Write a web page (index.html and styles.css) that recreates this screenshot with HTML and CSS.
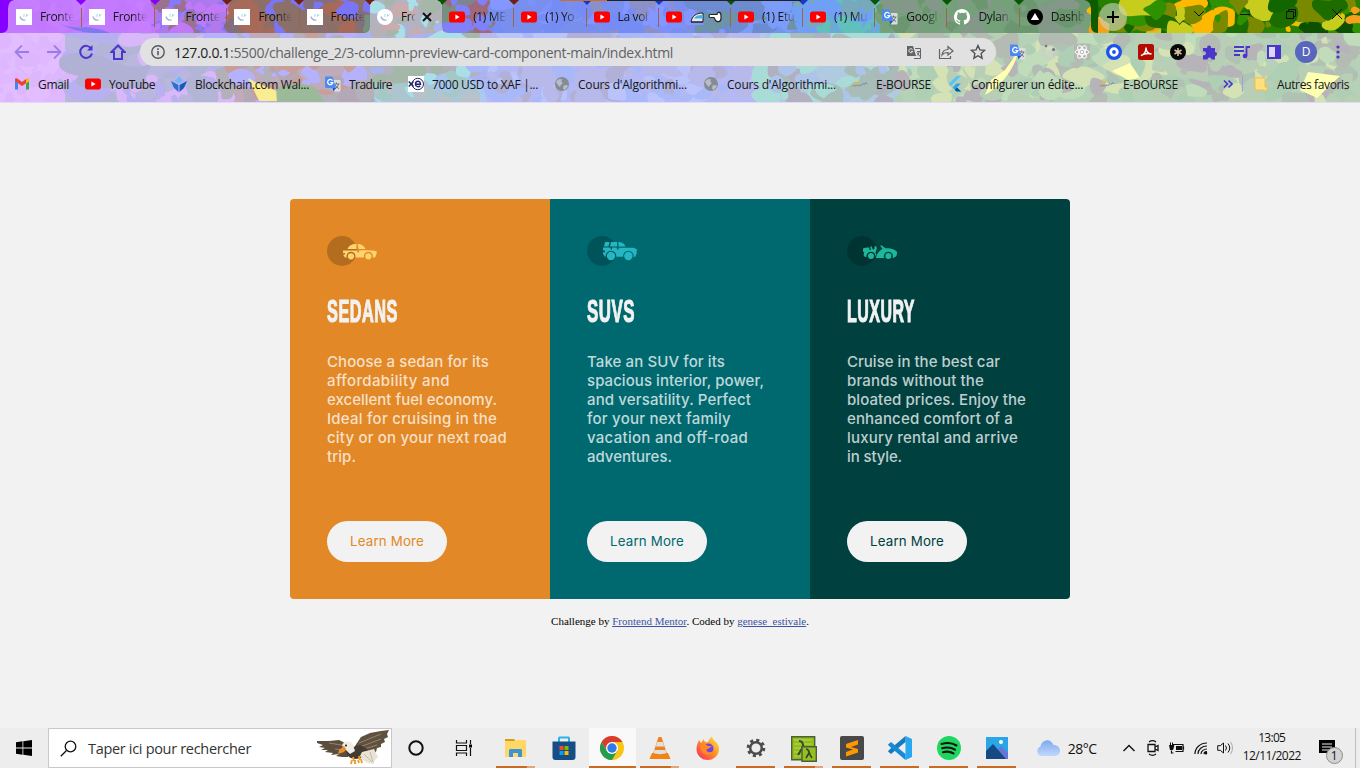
FILE: index.html
```html
<!DOCTYPE html>
<html lang="en">
<head>
<meta charset="utf-8">
<title>Frontend Mentor | 3-column preview card component</title>
<link rel="stylesheet" href="styles.css">
</head>
<body>
<svg class="defs" aria-hidden="true">
  <mask id="arch-s" maskUnits="userSpaceOnUse" x="0" y="0" width="51" height="30"><path d="M0 0h51v30H0z" fill="#fff"/><circle cx="24" cy="20.300" r="4.500"/><circle cx="41.400" cy="20.300" r="4.500"/></mask>
  <mask id="arch-l" maskUnits="userSpaceOnUse" x="0" y="0" width="51" height="30"><path d="M0 0h51v30H0z" fill="#fff"/><circle cx="24" cy="20" r="5.300"/><circle cx="41.400" cy="20" r="5.300"/></mask>
  <symbol id="fm" viewBox="0 0 16 16"><path d="M4 7.500c.5 2.500 2.500 3.800 5.500 3.600" fill="none" stroke="#a9b2d4" stroke-width="1.300"/><path d="M8 5v3M10.500 7.500l2-2M10.500 5v2.500" fill="none" stroke="#a4dbe0" stroke-width="1"/></symbol>
  <symbol id="yt" viewBox="0 0 16 16"><rect y="2.500" width="16" height="11" rx="2.800" fill="#f00"/><path d="M6.400 5.500v5L10.600 8z" fill="#fff"/></symbol>
  <symbol id="gt" viewBox="0 0 16 16"><path d="M6 4h8.500a1 1 0 0 1 1 1v9.500a1 1 0 0 1-1 1H9z" fill="#dcdcdc"/><path d="M8.500 8h6M11.500 6.500V8M13.500 8c-.5 2.500-2 4-4 5M10 8.500c.8 2 2 3 4 4" stroke="#68747c" fill="none"/><path d="M1 .5h6.500L11 12H1.500A1.500 1.500 0 0 1 0 10.500v-9a1 1 0 0 1 1-1z" fill="#4a8af4"/><path d="M7.500 12H11l-2.500 3.500z" fill="#2454d6"/><path d="M7.400 4.600a2.600 2.600 0 1 0 .4 2H5.300" fill="none" stroke="#fff" stroke-width="1.300"/></symbol>
  <symbol id="globe" viewBox="0 0 16 16"><circle cx="8" cy="8" r="7" fill="#858b92"/><path d="M2 5.500l3-2.500 3.500.5-1.500 2 2 1.500-2 2-1.500 2-2-2.500zM9.500 9.500l3.500-.5 1 1.500-3.500 3.500-1.500-1.500z" fill="#b9bdcb"/></symbol>
  <symbol id="eb" viewBox="0 0 16 16"><path d="M1 10c1.500 0 3-4.500 6-4.500" stroke="#e9bd2d" stroke-width="1.400" fill="none"/><path d="M1 10.500c1-3 2 1 3-1s2 2 3 0 2 2 3-1 2 2 3-1 1 1.500 2.500 0" stroke="#7388a5" fill="none"/></symbol>
</svg>

<header class="chrome">
  <svg class="theme" id="theme" viewBox="0 0 1360 103" preserveAspectRatio="none"></svg>
  <div class="chrome-ui">
    <div class="tabstrip">
      <div class="tab wide"><svg class="ic white"><use href="#fm"/></svg><span class="title">Fronte</span></div>
      <div class="tab wide"><svg class="ic white"><use href="#fm"/></svg><span class="title">Fronte</span></div>
      <div class="tab wide"><svg class="ic white"><use href="#fm"/></svg><span class="title">Fronte</span></div>
      <div class="tab"><svg class="ic white"><use href="#fm"/></svg><span class="title">Fronte</span></div>
      <div class="tab last slim"><svg class="ic white"><use href="#fm"/></svg><span class="title">Fronte</span></div>
      <div class="tab active"><svg class="ic white round"><use href="#fm"/></svg><span class="title short">Fro</span><svg class="close" viewBox="0 0 10 10"><path d="M1 1l8 8M9 1L1 9" stroke="#111" stroke-width="2"/></svg></div>
      <div class="tab"><svg class="ic"><use href="#yt"/></svg><span class="title">(1) ME</span></div>
      <div class="tab"><svg class="ic"><use href="#yt"/></svg><span class="title">(1) Yo</span></div>
      <div class="tab"><svg class="ic"><use href="#yt"/></svg><span class="title">La voi</span></div>
      <div class="tab"><svg class="ic"><use href="#yt"/></svg>
        <svg class="emoji" viewBox="0 0 33 16"><path d="M1 13C2 7 6 4 13 4v9z" fill="#e8e8e8" stroke="#222"/><path d="M4 9.500C5 7 8 6 13 6v3.500z" fill="#48b0e8"/><path d="M1 13h12" stroke="#222"/><path d="M20.500 5.500h6.500c0-3 4-3 4 1v3c0 4-5 4-6 1l-1-2h-3.500c-2 0-2-3 0-3z" fill="#fff" stroke="#222" stroke-width="1.200"/></svg></div>
      <div class="tab"><svg class="ic"><use href="#yt"/></svg><span class="title">(1) Etu</span></div>
      <div class="tab"><svg class="ic"><use href="#yt"/></svg><span class="title">(1) Mu</span></div>
      <div class="tab"><svg class="ic"><use href="#gt"/></svg><span class="title">Googl</span></div>
      <div class="tab"><svg class="ic" viewBox="0 0 16 16"><path fill="#fff" d="M8 0C3.580 0 0 3.580 0 8c0 3.540 2.290 6.530 5.470 7.590.4.070.55-.17.55-.38v-1.490c-2.010.37-2.530-.49-2.690-.94-.09-.23-.48-.94-.82-1.130-.28-.15-.68-.52-.01-.53.63-.01 1.080.58 1.230.82.72 1.210 1.870.87 2.330.66.07-.52.28-.87.51-1.070-1.780-.2-3.640-.89-3.640-3.950 0-.87.31-1.590.82-2.150-.08-.2-.36-1.020.08-2.120 0 0 .67-.21 2.200.82a7.500 7.500 0 0 1 4 0c1.530-1.040 2.200-.82 2.200-.82.44 1.100.16 1.920.08 2.120.51.56.82 1.270.82 2.150 0 3.070-1.870 3.750-3.650 3.950.29.25.54.73.54 1.480v2.200c0 .21.15.46.55.38A8 8 0 0 0 8 0z"/></svg><span class="title">Dylan.</span></div>
      <div class="tab last"><svg class="ic" viewBox="0 0 16 16"><circle cx="8" cy="8" r="8"/><path d="M8 4l4.200 7H3.800z" fill="#fff"/></svg><span class="title">Dashb</span></div>
      <div class="newtab"><svg viewBox="0 0 28 28"><circle cx="14" cy="14" r="14" fill="#c9d3bd" opacity=".62"/><path d="M14 8v12M8 14h12" stroke="#000" stroke-width="2"/></svg></div>
      <div class="winctl">
        <svg viewBox="0 0 16 16"><path d="M3 5l5 5 5-5" /></svg>
        <svg viewBox="0 0 16 16"><path d="M3 8.500h10"/></svg>
        <svg viewBox="0 0 16 16"><path d="M3.500 5.500h7v7h-7zM5.500 5.500v-2h7v7h-2"/></svg>
        <svg viewBox="0 0 16 16"><path d="M3 3l10 10M13 3L3 13"/></svg>
      </div>
    </div>

    <div class="toolbar">
      <div class="nav">
        <svg viewBox="0 0 16 16" class="dim"><path d="M15 8H2M8 1.500L1.500 8 8 14.500"/></svg>
        <svg viewBox="0 0 16 16" class="dim"><path d="M1 8h13M8 1.500L14.500 8 8 14.500"/></svg>
        <svg viewBox="0 0 16 16"><path d="M13.200 4.500A6 6 0 1 0 14 9.500" stroke-width="2"/><path d="M14.500 1v5.500H9z" fill="#4b36cc" stroke="none"/></svg>
        <svg viewBox="0 0 16 16"><path d="M8 1.500L1.500 8H4v7h8V8h2.500z" stroke-width="2"/></svg>
      </div>
      <div class="omnibox">
        <svg class="info" viewBox="0 0 16 16"><circle cx="8" cy="8" r="6.200" fill="none" stroke="#55585c" stroke-width="1.400"/><path d="M8 7v4.300M8 4.300v1.600" stroke="#55585c" stroke-width="1.600"/></svg>
        <span class="url" data-w="499"><b>127.0.0.1</b>:5500/challenge_2/3-column-preview-card-component-main/index.html</span>
        <span class="omni-icons">
          <svg viewBox="0 0 16 16"><path d="M1 2h6l3 10H1z" fill="#606367"/><path d="M9 4.500h5.500v10H8M11 7.500h3M13 7.500c0 2-1 3-2 4M11 8.500l3 4" fill="none" stroke="#606367"/><path d="M6.500 5.500a2 2 0 1 0 .3 1.800H5" stroke="#e1e1e1" fill="none"/></svg>
          <svg viewBox="0 0 16 16"><path d="M1.500 5v9.500h11V12M4 11c.5-4 3-5.500 6-5.500V2.500L15 7l-5 4V8.500c-3 0-4.500.5-6 2.500z" fill="none" stroke="#606367" stroke-width="1.200"/></svg>
          <svg viewBox="0 0 16 16"><path d="M8 1.500l1.900 4.400 4.800.4-3.600 3.200 1 4.700L8 11.700l-4.100 2.500 1-4.700L1.300 6.300l4.800-.4z" fill="none" stroke="#505356" stroke-width="1.400"/></svg>
        </span>
      </div>
      <div class="exts">
        <svg viewBox="0 0 16 16"><use href="#gt"/></svg>
        <svg viewBox="0 0 16 16"><circle cx="7.500" cy="8.500" r="6.500" fill="none" stroke="#cdcdc9" stroke-width="1.500"/><circle cx="8" cy="9" r="3" fill="none" stroke="#d3d3cf" stroke-width="1.500"/><circle cx="4" cy="2" r="1.300" fill="#777"/><circle cx="11.500" cy="5.500" r="1.600" fill="#777"/></svg>
        <svg viewBox="0 0 16 16"><rect width="16" height="16" fill="#b6b6b2"/><g fill="none" stroke="#fff"><ellipse cx="8" cy="8" rx="7" ry="2.700"/><ellipse cx="8" cy="8" rx="7" ry="2.700" transform="rotate(60 8 8)"/><ellipse cx="8" cy="8" rx="7" ry="2.700" transform="rotate(120 8 8)"/></g><circle cx="8" cy="8" r="1.300" fill="#fff"/></svg>
        <svg viewBox="0 0 16 16"><circle cx="8" cy="8" r="8" fill="#1c53f0"/><circle cx="8" cy="8" r="3.300" fill="#1c53f0" stroke="#fff" stroke-width="2.800"/></svg>
        <svg viewBox="0 0 16 16"><rect width="16" height="16" rx="2.500" fill="#b30b00"/><path d="M3 11.500c4-1 5-4 5-8 0 4 1.500 6 5.500 6.500-4-1-7-.5-10.500 1.500z" fill="none" stroke="#fff" stroke-width="1.400"/></svg>
        <svg viewBox="0 0 16 16"><circle cx="8" cy="8" r="8" fill="#080808"/><path d="M8 4v8M4.500 6l7 4M11.500 6l-7 4" stroke="#d9c7a8" stroke-width="1.500"/></svg>
        <svg viewBox="0 0 16 16"><path d="M1 4h4.200a2 2 0 1 1 3.800 0h4v4a2 2 0 1 1 0 4v3.500H9.500a2 2 0 1 0-4 0H1V11a2 2 0 1 0 0-3.500z" fill="#4b36cc"/></svg>
        <svg viewBox="0 0 16 16"><path d="M0 3h10M0 7h10M0 11h6M12.500 12V3H16" stroke="#4b36cc" stroke-width="1.800" fill="none"/><circle cx="11" cy="12" r="2.300" fill="#4b36cc"/></svg>
        <svg viewBox="0 0 16 16"><path d="M2 2h12v12H2z" fill="#ddd8fa" stroke="#4b36cc" stroke-width="2"/><path d="M9 2h5v12H9z" fill="#4b36cc"/></svg>
        <span class="avatar">D</span>
        <svg viewBox="0 0 16 16" fill="#4b36cc"><circle cx="8" cy="3" r="1.600"/><circle cx="8" cy="8" r="1.600"/><circle cx="8" cy="13" r="1.600"/></svg>
      </div>
    </div>

    <nav class="bookmarks">
      <a><svg viewBox="0 0 16 16"><path d="M1 3v10.500h3V7z" fill="#4285f4"/><path d="M15 3v10.500h-3V7z" fill="#34a853"/><path d="M1 5V3.500C1 2 2.800 2 4 3l4 3 4-3v4.200L8 10 1 5z" fill="#ea4335"/><path d="M12 3c1.500-1.200 3-.8 3 1v1.500l-3 2z" fill="#fbbc04"/></svg><span data-w="31">Gmail</span></a>
      <a><svg><use href="#yt"/></svg><span data-w="46">YouTube</span></a>
      <a><svg viewBox="0 0 16 16"><path d="M8 0l4.500 5L8 7.500 3.500 5z" fill="#75b8f5"/><path d="M0 5l7.500 4v7L3 12z" fill="#2b6fd6"/><path d="M16 5L8.500 9v7l4.500-4z" fill="#185abc"/></svg><span data-w="114">Blockchain.com Wal...</span></a>
      <a><svg><use href="#gt"/></svg><span data-w="43">Traduire</span></a>
      <a><svg viewBox="0 0 16 16"><rect width="16" height="16" fill="#fff"/><circle cx="9.800" cy="8" r="5.700" fill="none" stroke="#20256b"/><path d="M.8 5.500L5.500 10.500M5.500 5.500L.8 10.500M7.500 8.200h5c0-4-5-3.800-5 0 0 3 3.400 3 4.700 1.500" fill="none" stroke="#20256b" stroke-width="1.500"/></svg><span data-w="106">7000 USD to XAF |...</span></a>
      <a><svg><use href="#globe"/></svg><span data-w="109">Cours d'Algorithmi...</span></a>
      <a><svg><use href="#globe"/></svg><span data-w="109">Cours d'Algorithmi...</span></a>
      <a><svg><use href="#eb"/></svg><span data-w="55">E-BOURSE</span></a>
      <a><svg viewBox="0 0 16 16"><path d="M9.500 0H14L4 10 1.800 7.700z" fill="#54c5f8"/><path d="M9.500 7.500H14L10 11.500l4 4H9.500l-4-4z" fill="#29a8ee"/><path d="M7.800 13.700l2.200-2.200 4 4H9.500z" fill="#01579b"/></svg><span data-w="112">Configurer un édite...</span></a>
      <a><svg><use href="#eb"/></svg><span data-w="55">E-BOURSE</span></a>
      <span class="more"><svg viewBox="0 0 10 10"><path d="M1 1.500L4.500 5 1 8.500M5.500 1.500L9 5 5.500 8.500"/></svg></span>
      <a class="others"><svg viewBox="0 0 16 16"><path d="M2 2h10v9h2v4h-2l-1-1H2z" fill="#ffdf7e" stroke="#ecc14f"/></svg><span data-w="72">Autres favoris</span></a>
    </nav>
  </div>
</header>

<main class="page">
  <div class="cards">
    <section class="card sedans">
      <svg class="car" viewBox="0 0 51 30"><circle cx="15" cy="15" r="15" fill="#000" opacity=".2"/><g fill="#ffd36e"><path mask="url(#arch-s)" d="M20.500 13c1-3 4-5 8.800-5l.3 5zM30.600 8c4 0 6.300 1.500 8 5h-7zM16 14.500h13.800l1 2h1.500l-.5-2c7-.5 13-.3 18 .8l-.3 2.700-1.500 3.500H18L16 18.500h2V17h-2z"/><circle cx="24" cy="20.300" r="3.100"/><circle cx="41.400" cy="20.300" r="3.100"/></g></svg>
      <h2><span data-w="71" data-fit="scale">SEDANS</span></h2>
      <p><span data-w="162">Choose a sedan for its</span><br><span data-w="123">affordability and</span><br><span data-w="170">excellent fuel economy.</span><br><span data-w="170">Ideal for cruising in the</span><br><span data-w="180">city or on your next road</span><br><span data-w="29">trip.</span></p>
      <a class="btn"><span data-w="74">Learn More</span></a>
    </section>
    <section class="card suvs">
      <svg class="car" viewBox="0 0 51 30"><circle cx="15" cy="15" r="15" fill="#000" opacity=".2"/><g fill="#26b5c2"><path mask="url(#arch-l)" d="M18 6h4.500l-1 4.500H17zM24 6h6v4.500h-7zM31.300 6c4 0 6 1.500 7.200 4.500h-7zM16 11.500h7.500l.3 2h1.200v-2h4.500l.7 2h1.500v-1.800h12c3 0 5 .7 6.300 1.500l-.5 2 .3 2-1.500 3.500H18L16 18v-1.800h2v-1.700h-2z"/><circle cx="24" cy="20" r="4.200"/><circle cx="41.400" cy="20" r="4.200"/></g></svg>
      <h2><span data-w="48" data-fit="scale">SUVS</span></h2>
      <p><span data-w="138">Take an SUV for its</span><br><span data-w="177">spacious interior, power,</span><br><span data-w="164">and versatility. Perfect</span><br><span data-w="144">for your next family</span><br><span data-w="161">vacation and off-road</span><br><span data-w="85">adventures.</span></p>
      <a class="btn"><span data-w="74">Learn More</span></a>
    </section>
    <section class="card luxury">
      <svg class="car" viewBox="0 0 51 30"><circle cx="15" cy="15" r="15" fill="#000" opacity=".2"/><g fill="#1db79b"><path mask="url(#arch-s)" d="M16 12.500c2-1 4.500-1.200 6.300-.8v2.300h1.500l-.6-3.500 1.300-.3 1.200 3h1.500l.3-2.800 1.800-.3.500 3-1.300 3.500 1 2.500-1.500 2H18L16.500 19l.7-2.500-1.200-1zM34 9l4.500 3.300c5-.5 9.500 1 11.800 4l-1 4-3 1.700H29c.5-4 3-7 6.500-9.200L33.300 10z"/><circle cx="24" cy="19.900" r="3"/><circle cx="41.400" cy="19.900" r="3"/></g></svg>
      <h2><span data-w="68" data-fit="scale">LUXURY</span></h2>
      <p><span data-w="153">Cruise in the best car</span><br><span data-w="137">brands without the</span><br><span data-w="179">bloated prices. Enjoy the</span><br><span data-w="166">enhanced comfort of a</span><br><span data-w="171">luxury rental and arrive</span><br><span data-w="55">in style.</span></p>
      <a class="btn"><span data-w="74">Learn More</span></a>
    </section>
  </div>
  <footer class="attribution">Challenge by <a>Frontend Mentor</a>. Coded by <a>genese_estivale</a>.</footer>
</main>

<div class="taskbar">
  <div class="start"><svg viewBox="0 0 16 16"><path d="M0 2.200L6.500 1.300V7.600H0zM7.300 1.200L16 0v7.600H7.300zM0 8.400h6.500v6.300L0 13.800zM7.300 8.400H16V16l-8.700-1.200z"/></svg></div>
  <div class="search">
    <svg class="mag" viewBox="0 0 17 17"><circle cx="10.500" cy="6.500" r="5.300" fill="none" stroke="#111" stroke-width="1.300"/><path d="M6.500 10.500L.8 16.200" stroke="#111" stroke-width="1.300"/></svg>
    <span data-w="163">Taper ici pour rechercher</span>
    <svg class="eagle" viewBox="0 0 72 38">
      <path d="M0 12l12 0 10-1 6 3 5 7-2 7-6 0-6-1 3-2-8 1 2-2-8-1 3-2-7 0 4-2-6-1 4-2-6-2z" fill="#5c4d3d"/>
      <path d="M38 17l6-9 9-4 11-2 8-1-2 4 1 3-4 2 1 3-4 2 0 3-4 1-1 4-5 1-6 3-10-3z" fill="#5f503f"/>
      <path d="M12 14l12 2 6 6M42 14l22-9M43 18l21-8M44 21l16-5M18 20l11 1" stroke="#a39179" stroke-width=".8" fill="none"/>
      <path d="M29 20c0 6 3 10 10 10l10-2 3-7-9-5z" fill="#443a31"/>
      <path d="M45 23l12-3 4 8-4 4 0 3-6-1-5-3-3-4z" fill="#e8e3d5"/><path d="M47 25l8 8M53 23l3 10" stroke="#b8b0a0" stroke-width=".8"/>
      <path d="M25 16c2-4 9-5 11 0l2 6-5 3-5-5z" fill="#f1ede4"/>
      <path d="M27 17l-5 4-1 4 6-2 2-3z" fill="#eb8f27"/><circle cx="29" cy="16.500" r=".9"/>
      <path d="M36 28l1 4M42 27l1 4M35 31l-1 4M38 31v4M41 31l1 3M44 30l1 4" stroke="#ee9b29" stroke-width="1.900"/>
    </svg>
  </div>
  <div class="apps system">
    <div class="app"><svg viewBox="0 0 24 24"><circle cx="12" cy="12" r="6.700" fill="none" stroke="#111" stroke-width="2"/></svg></div>
    <div class="app"><svg viewBox="0 0 24 24"><path d="M4.500 4v3h10V4M4.500 20v-3h10v3M4.500 9.500h10v5h-10zM18.500 4v4M18.500 12v8" fill="none" stroke="#111" stroke-width="1.200"/><rect x="17" y="8.500" width="3" height="3"/></svg></div>
  </div>
  <div class="apps">
    <div class="app run multi"><svg viewBox="0 0 24 24"><path d="M1 3h9l2 3H1z" fill="#d89d17"/><path d="M1 5h10l1-1h10v17H1z" fill="#ffd766"/><path d="M5 21v-7l1-1h11l1 1v7h-4v-4H9v4z" fill="#3c94d4"/></svg></div>
    <div class="app"><svg viewBox="0 0 24 24"><path d="M7 7V2q0-.5.5-.5h9q.5 0 .5.500V7" fill="none" stroke="#2bb4ea" stroke-width="2"/><path d="M.5 5.500h23V21c0 2-1 3-3 3h-17c-2 0-3-1-3-3z" fill="#164d87"/><path d="M7.500 10h4v4h-4z" fill="#f25022"/><path d="M12.500 10h4v4h-4z" fill="#7fba00"/><path d="M7.500 15h4v4h-4z" fill="#00a4ef"/><path d="M12.500 15h4v4h-4z" fill="#ffb900"/></svg></div>
    <div class="app run current"><svg viewBox="0 0 24 24"><circle cx="12" cy="12" r="12" fill="#f9c515"/><path d="M1.600 6A12 12 0 0 1 22.400 6H12L7 15z" fill="#db3b2e"/><path d="M1.600 6A12 12 0 0 0 12 24l5.200-9-10.400 0z" fill="#229d50"/><circle cx="12" cy="12" r="6" fill="#fff"/><circle cx="12" cy="12" r="4.700" fill="#3079e8"/></svg></div>
    <div class="app run multi"><svg viewBox="0 0 24 24"><path d="M4 17h16l2.500 6h-21z" fill="#f58212"/><path d="M10.500 1h3L19 18c-3 2-11 2-14 0z" fill="#ee8220"/><path d="M9.200 6h5.600l1.400 4.500H7.800zM6.500 14h11l1 3c-3 1.500-10 1.500-13 0z" fill="#e0e0e0"/></svg></div>
    <div class="app"><svg viewBox="0 0 24 24"><defs><linearGradient id="fx" x1="1" y1="0" x2="0" y2="1"><stop stop-color="#fff04a"/><stop offset=".5" stop-color="#ff8a22"/><stop offset="1" stop-color="#f42368"/></linearGradient></defs><path d="M3 4l2 3 3-4c0 3 1 3 4 3 1-3 2-4 4-5.500 0 3 5 5 6.500 9C25 17 19 24 12 24 5 24 .5 19 .5 13 .5 9 2 7 3 4z" fill="url(#fx)"/><circle cx="12.500" cy="12.500" r="5" fill="#7543e0"/><path d="M4 9c4-1 6-1 8 1l4 0-4 3c-2 0-2 2 0 3 3 1 6-1 6-1-2 5-12 5-13-2z" fill="#ff8b26"/></svg></div>
    <div class="app run"><svg viewBox="0 0 24 24"><circle cx="12" cy="12" r="7.800" fill="none" stroke="#4c4c4c" stroke-width="3" stroke-dasharray="3.060 3.060"/><circle cx="12" cy="12" r="5.800" fill="none" stroke="#4c4c4c" stroke-width="2.500"/></svg></div>
    <div class="app run multi"><svg class="big" viewBox="0 0 26 26"><path d="M.7.700h23v23H.7z" fill="#91bd1c" stroke="#4f5c3b" stroke-width="1.400"/><path d="M3 4h18M3 8h18M3 12h18M3 16h18M3 20h18" stroke="#b6d752"/><path d="M8 5c5 0 3 4 7 14M12 11l-5 8" stroke="#384237" stroke-width="2" fill="none"/><path d="M11 10.700h14.300v14.600H11z" fill="#94c11d" stroke="#4f5c3b" stroke-width="1.400"/><path d="M15 13c4 0 2 4 6 9M18 17l-3 5" stroke="#384237" stroke-width="1.600" fill="none"/></svg></div>
    <div class="app run"><svg viewBox="0 0 24 24"><rect width="24" height="24" rx="2" fill="#484848"/><path d="M6 8l12-4v4.500L11 11l7 2v3.500L6 20.500V16l7-2.500-7-2z" fill="#ff9800"/></svg></div>
    <div class="app run"><svg viewBox="0 0 24 24"><path d="M17.500 0L24 3v18l-6.500 3z" fill="#29a8f2"/><path d="M17.500 0v6L3 18l-3-2.500L1 14z" fill="#147bc1"/><path d="M17.500 24v-6L3 6 0 8.500 1 10z" fill="#168bd4"/></svg></div>
    <div class="app run"><svg viewBox="0 0 24 24"><circle cx="12" cy="12" r="12" fill="#1ed760"/><path d="M4.500 8c5-1.500 11-1 15 1.500M5.200 12.300c4.500-1.300 9-.8 12.800 1.400M6 16.200c4-1 7.500-.6 10.500 1.200" stroke="#111" stroke-width="2.100" fill="none" stroke-linecap="round"/></svg></div>
    <div class="app run"><svg viewBox="0 0 24 24"><rect x="1" y="1" width="22" height="22" fill="#2aa5e7"/><path d="M10 17l6-7 7 7v6H10z" fill="#6775d4"/><path d="M1 15l7-7 13 15H1z" fill="#164984"/><circle cx="16" cy="6" r="2" fill="#fff"/></svg></div>
  </div>
  <div class="tray">
    <svg class="cloud" viewBox="0 0 24 18"><defs><linearGradient id="cl" x2="0" y2="1"><stop stop-color="#7fa9ed"/><stop offset="1" stop-color="#c1d8fc"/></linearGradient></defs><path d="M5 17a5 5 0 0 1-.5-9.500C6 0 15-1 17.500 6 26 6 26 17 19 17z" fill="url(#cl)"/></svg>
    <span class="temp" data-w="29">28°C</span>
    <div class="tray-icons">
      <svg viewBox="0 0 16 16"><path d="M2.500 11L8 5.500l5.500 5.500" stroke-width="1.400"/></svg>
      <svg viewBox="0 0 16 16"><path d="M3 4.500h7v7H3zM10 7l3-1.500v5L10 9M4 2c2-1.500 5-1.500 7 0M4 14c2 1.500 5 1.500 7 0" stroke-width="1.300"/></svg>
      <svg viewBox="0 0 16 16"><path d="M4.500 7V4.500h9.500v7H6.500M14.500 6.500v3M2.500 10.500V13h2" stroke-width="1.200"/><path d="M7 6h6v4H7zM0 5h5v2l-1 3H1z" fill="#111" stroke="none"/><path d="M1.500 2.500V5M3.500 2.500V5"/></svg>
      <svg viewBox="0 0 16 16"><path d="M2 14C2 8 7 3 14 3M5 14c0-4.500 4-8 9-8M8 14c0-3 3-5 6-5M11 14c0-1.500 1.500-2.500 3-2.500" stroke-width="1.200"/><circle cx="12.800" cy="13" r="1.500" fill="#111" stroke="none"/></svg>
      <svg viewBox="0 0 16 16"><path d="M.7 5.700h2.600L6.500 3v10L3.300 10.300H.7zM8.500 5.500q2 2.500 0 5M11 3.500q3.500 4.500 0 9"/><path d="M13.500 1.800q4 6.200 0 12.400" stroke="#aaa"/></svg>
    </div>
    <div class="clock"><span data-w="27">13:05</span><span data-w="58">12/11/2022</span></div>
    <div class="notif"><svg viewBox="0 0 18 16"><path d="M1 0h16v13h-4v3l-3-3H1z"/><path d="M4 4h10M4 7h10M4 10h7" stroke="#eee"/></svg><span class="badge">1</span></div>
    <i class="peek"></i>
  </div>
</div>
<script src="app.js"></script>
</body>
</html>
```
FILE: styles.css
```css
* { box-sizing: border-box; }
body { margin: 0; width: 1360px; height: 768px; overflow: hidden; display: flex; flex-direction: column; background: #f2f2f2; font-family: "Open Sans", "Noto Sans", sans-serif; }
svg { display: block; flex: none; }
.defs { position: absolute; width: 0; height: 0; }
[data-w] { display: inline-block; white-space: pre; }

.chrome { position: relative; height: 103px; flex: none; border-bottom: 1px solid #e3d9f7; overflow: hidden; }
.theme { position: absolute; left: 0; top: 0; width: 1360px; height: 103px; }
.chrome-ui { position: relative; font-size: 12px; color: #161616; }
.tabstrip { height: 33px; display: flex; padding-left: 9px; }
.tab { width: 72.200px; height: 33px; padding: 0 0 0 7px; display: flex; align-items: center; background: linear-gradient(#9a6648, #9a6648) no-repeat right 8px / 1px 19px; }
.tab.last, .tab.active { background-image: none; }
.tab.wide { width: 72.800px; }
.tab.slim { width: 70.400px; }
.ic { width: 16px; height: 16px; }
.ic.white { background: #fff; }
.ic.round { border-radius: 50%; }
.title { width: 35px; margin-left: 8px; overflow: hidden; white-space: nowrap; letter-spacing: -.35px; -webkit-mask-image: linear-gradient(90deg, #000 55%, transparent 98%); mask-image: linear-gradient(90deg, #000 55%, transparent 98%); }
.title.short { width: 15px; }
.close { width: 10px; height: 10px; margin-left: 6px; }
.emoji { width: 33px; height: 16px; margin-left: 8px; }
.newtab { margin: 3px 0 0 7px; }
.newtab svg { width: 28px; height: 28px; }
.winctl { margin-left: 50px; display: flex; gap: 30px; padding: 6px 0 0 14px; }
.winctl svg { width: 16px; height: 16px; fill: none; stroke: #111; }

.toolbar { height: 38px; display: flex; align-items: center; }
.nav { width: 140px; display: flex; gap: 16px; padding-left: 14px; }
.nav svg { width: 16px; height: 16px; fill: none; stroke: #4b36cc; stroke-width: 1.800; }
.nav .dim { opacity: .45; }
.omnibox { width: 856px; height: 28px; border-radius: 14px; background: #e1e1e1; display: flex; align-items: center; padding: 0 10px; }
.info { width: 16px; height: 16px; margin-right: 8px; }
.url { font-size: 14px; color: #5f6266; }
.url b { font-weight: 400; color: #202124; }
.omni-icons { margin-left: auto; display: flex; gap: 16px; }
.omni-icons svg, .exts svg { width: 16px; height: 16px; }
.exts { margin-left: 14px; display: flex; gap: 16px; align-items: center; }
.avatar { width: 22px; height: 22px; margin: 0 -3px; border-radius: 50%; background: #5866bd; color: #fff; text-align: center; line-height: 22px; font-size: 12px; }

.bookmarks { height: 26px; display: flex; align-items: center; gap: 16px; padding-left: 14px; }
.bookmarks a { display: flex; align-items: center; gap: 8px; }
.bookmarks a svg { width: 16px; height: 16px; }
.more { margin-left: 29px; width: 20px; border-right: 1px solid #9da0dc; height: 16px; padding-top: 3px; }
.more svg { width: 10px; height: 10px; fill: none; stroke: #4b36cc; stroke-width: 1.700; }
.bookmarks .others { margin-left: -6px; }

.page { height: 625px; flex: none; padding-top: 96px; }
.cards { width: 780px; height: 400px; margin: 0 auto; display: flex; border-radius: 4px; overflow: hidden; }
.card { width: 260px; padding: 37px; display: flex; flex-direction: column; align-items: flex-start; }
.sedans { background: #e28826; }
.suvs { background: #006970; }
.luxury { background: #004140; }
.car { width: 51px; height: 30px; }
.card h2 { margin: 25px 0 0; height: 40px; font: 700 32px/40px "Liberation Sans", sans-serif; color: #f2f2f2; -webkit-text-stroke: 1.200px #f2f2f2; letter-spacing: 1px; }
.card p { margin: 21px 0 0; font: 500 15px/19px "Inter", sans-serif; color: rgba(255, 255, 255, .75); white-space: nowrap; }
.card p span { vertical-align: top; }
.btn { width: 120px; height: 41px; margin-top: auto; border-radius: 21px; background: #f2f2f2; font: 400 13.300px/41px "Inter", sans-serif; display: flex; justify-content: center; }
.sedans .btn { color: #e28826; }
.suvs .btn { color: #006970; }
.luxury .btn { color: #004140; }
.attribution { margin-top: 16px; text-align: center; font: 11px/13px "Liberation Serif", serif; color: #000; }
.attribution a { color: #3e52a3; text-decoration: underline; }

.taskbar { height: 40px; flex: none; background: #ededed; display: flex; color: #111; }
.start { width: 48px; padding: 12px 16px; }
.start svg { width: 16px; height: 16px; }
.search { width: 344px; height: 40px; background: #fff; border: 1px solid #c8c8c8; display: flex; align-items: center; padding-left: 11px; font-size: 14.500px; color: #333; }
.mag { width: 17px; height: 17px; margin-right: 11px; }
.eagle { width: 72px; height: 38px; margin-left: auto; margin-right: 2px; }
.apps { display: flex; }
.system { margin-right: 3.500px; }
.app { width: 48.100px; height: 40px; position: relative; display: flex; justify-content: center; padding-top: 8px; }
.app svg { width: 24px; height: 24px; }
.app svg.big { width: 26px; height: 26px; }
.run::after { content: ""; position: absolute; left: 4px; bottom: 0; width: 39px; height: 2px; background: #cd6a22; }
.multi::after { background: linear-gradient(90deg, #cd6a22 31px, #dfa57c 31px); }
.current { background: linear-gradient(#f9f9f9, #f9f9f9) no-repeat 1px 0 / 47px 40px; }
.current::after { left: 1px; width: 47px; }
.tray { display: flex; align-items: center; padding-left: 15px; }
.cloud { width: 24px; height: 18px; }
.temp { margin-left: 8px; font-size: 14px; }
.tray-icons { display: flex; gap: 8px; margin-left: 24px; }
.tray-icons svg { width: 16px; height: 16px; fill: none; stroke: #111; }
.clock { width: 60px; margin-left: 9px; display: flex; flex-direction: column; align-items: center; font-size: 12px; line-height: 18px; padding-bottom: 2px; }
.notif { position: relative; width: 30px; height: 40px; margin-left: 16px; padding-top: 12px; }
.notif > svg { width: 18px; height: 16px; }
.badge { position: absolute; left: 8px; top: 19px; width: 17px; height: 17px; border: 1px solid #8c8c8c; border-radius: 50%; background: #d2d2d2; font-size: 12px; line-height: 15px; text-align: center; }
.peek { width: 1px; height: 40px; margin-left: 7px; background: #bdbdbd; }
```
FILE: app.js
```js
// Paint-splash browser theme: [x0, x1, base, ...splash colours]
const strip = [
  [0, 155, '#c47aff', '#c47aff', '#c178fb', '#c67eff'],
  [155, 230, '#aa7aec', '#8878ff', '#9a7290', '#c07af8', '#b07aec'],
  [230, 370, '#8c6f68', '#7b75f5', '#a76a58', '#836e7c', '#8a7068'],
  [370, 490, '#7f8590', '#a0687c', '#8080f8', '#76907f'],
  [490, 700, '#7d90fb', '#748cf4', '#8b90c8', '#8496ff', '#788fed'],
  [700, 800, '#7197ed', '#6e92a8', '#7c9cfa', '#6c8bd0'],
  [800, 880, '#68acd4', '#70a0f5', '#62c0bc', '#78a8bc'],
  [880, 1092, '#79a17e', '#6c966f', '#839889', '#74a07a'],
  [1092, 1360, '#277f00', '#0c5000', '#126600', '#ffb800', '#2f9000', '#1c6c00', '#309200', '#f5a018', '#c8cc1c', '#7a8a00']
];
const bars = [
  [0, 65, '#e0b8ff', '#e2bdff', '#deb6fd'],
  [65, 225, '#b9b7de', '#d9b8fa', '#b8b0ef', '#b3b5d6', '#b9b7de'],
  [225, 365, '#bfabb9', '#b5b1fa', '#c89e98', '#b4a7b6', '#b2b0b8'],
  [365, 480, '#b2b2c3', '#a5b7a8', '#aadfe8', '#c9acae', '#aab2f0', '#b4b1b8'],
  [480, 760, '#b4b9f5', '#a9b8f8', '#b2b0d6', '#bac4fa', '#b7b9ea'],
  [760, 900, '#b0cbe0', '#a8bcb8', '#a9dcd6', '#b0b0c0', '#adc3ea'],
  [900, 1360, '#b5d2b8', '#b0c2b3', '#b6b4b9', '#d4e2b5', '#b8cfb5', '#c0dcba', '#afcfb5', '#b3bbb3']
];
let seed = 41;
const rnd = () => (seed = (seed * 16807) % 2147483647) / 2147483647;
function splash(cx, cy, r) {
  const n = 8, pts = [], stretch = 0.6 + rnd() * 1.2;
  for (let i = 0; i < n; i++) {
    const a = i / n * Math.PI * 2, d = r * (0.45 + rnd() * 0.8);
    pts.push([cx + Math.cos(a) * d * stretch, cy + Math.sin(a) * d]);
  }
  const mid = (p, q) => [(p[0] + q[0]) / 2, (p[1] + q[1]) / 2];
  let d = 'M' + mid(pts[n - 1], pts[0]);
  pts.forEach((p, i) => { d += 'Q' + p + ' ' + mid(p, pts[(i + 1) % n]); });
  return d + 'Z';
}
function paint(list, y0, y1, density) {
  let out = '';
  list.forEach(([a, b, base]) => { out += `<rect x="${a}" y="${y0}" width="${b - a}" height="${y1 - y0}" fill="${base}"/>`; });
  list.forEach(([a, b, , ...cols]) => {
    const n = Math.round((b - a) * (y1 - y0) / density);
    for (let i = 0; i < n; i++) {
      out += `<path d="${splash(a + rnd() * (b - a), y0 + rnd() * (y1 - y0), 4 + rnd() * 11)}" fill="${cols[Math.floor(rnd() * cols.length)]}"/>`;
    }
  });
  return out;
}
document.getElementById('theme').innerHTML =
  '<clipPath id="top"><path d="M0 0H1360V33H0z"/></clipPath>' +
  '<clipPath id="low"><path d="M0 33H364Q370 33 370 27V8Q370 0 378 0H434Q442 0 442 8V27Q442 33 448 33H1360V103H0z"/></clipPath>' +
  '<g clip-path="url(#top)">' + paint(strip, 0, 33, 85) +
  '<path d="M59 23q12 6 26 4 14 1 25 6H92Q72 31 59 23z" fill="#7f78f0"/>' +
  '<path d="M0 0H14Q8 1 8 9V26Q8 33 1 33H0z" fill="#8700ff"/>' +
  '<path d="M1084 0Q1091 1 1091 9V26Q1091 33 1098 33V0z" fill="#0f5c00"/>' +
  [81, 155].map(x => `<path d="M${x - 5} 0h10l-5 5z" fill="#8700ff"/>`).join('') +
  [227, 299, 370, 514].map(x => `<path d="M${x - 5} 0h10l-5 5z" fill="#73200e"/>`).join('') +
  [587, 659, 803].map(x => `<path d="M${x - 5} 0h10l-5 5z" fill="#1739ca"/>`).join('') +
  [442, 731, 875, 947, 1019].map(x => `<path d="M${x - 5} 0h10l-5 5z" fill="#075600"/>`).join('') +
  '<path d="M560 0h47v1h-47z" fill="#d36b20"/><path d="M607 0h194v1H607z" fill="#222"/></g>' +
  '<g clip-path="url(#low)">' + paint(bars, 0, 103, 120) +
  '<path d="M60 33h60l-4 12q-28-2-56-12z" fill="#b5b0ee"/>' +
  '<path d="M60 58Q82 46 108 59T153 63Q142 78 148 88H85Q70 82 79 76 54 72 60 58z" fill="#b1b1d6"/>' +
  '<path d="M248 78l9 5 20 8 2 10h-20z" fill="#f9ec91"/><path d="M276 88q25-8 40 0l8 14h-47z" fill="#9cba99"/>' +
  '<path d="M374 82q45 5 77-12 39 12 35 33H374z" fill="#a5dde8" opacity=".45"/>' +
  '<path d="M985 95q26-15 34-45l-14 20-14 10zM1308 72l32 4-23 22-17-8zM1112 71l18-8 10 15-12 2z" fill="#ffffb2"/></g>';

// Spread each label to its measured width, by tracking or by condensing the glyphs
document.querySelectorAll('[data-w]').forEach(el => {
  const want = +el.dataset.w, have = el.getBoundingClientRect().width;
  if (el.dataset.fit === 'scale') {
    el.style.transformOrigin = '0 50%';
    el.style.transform = `scaleX(${want / have})`;
  } else {
    el.style.letterSpacing = (want - have) / el.textContent.length + 'px';
  }
});
```
